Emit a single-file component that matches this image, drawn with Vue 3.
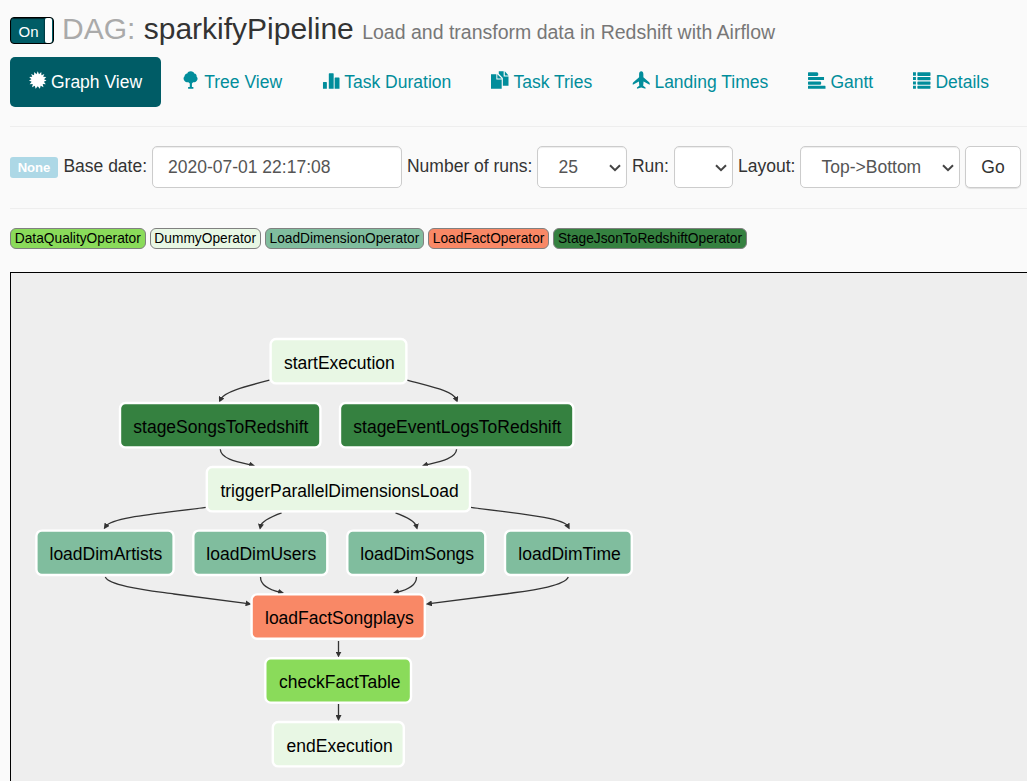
<script setup>
const tabs = [
  { label: 'Graph View', icon: 'certificate', active: true },
  { label: 'Tree View', icon: 'tree' },
  { label: 'Task Duration', icon: 'stats' },
  { label: 'Task Tries', icon: 'duplicate' },
  { label: 'Landing Times', icon: 'plane' },
  { label: 'Gantt', icon: 'align' },
  { label: 'Details', icon: 'list' },
]

const operators = [
  { name: 'DataQualityOperator', kind: 'quality' },
  { name: 'DummyOperator', kind: 'dummy' },
  { name: 'LoadDimensionOperator', kind: 'dimension' },
  { name: 'LoadFactOperator', kind: 'fact' },
  { name: 'StageJsonToRedshiftOperator', kind: 'stage' },
]

const nodes = [
  { name: 'startExecution', kind: 'dummy', x: 270.6, y: 339, w: 135.8, tx: 283.9, ty: 369 },
  { name: 'stageSongsToRedshift', kind: 'stage', x: 120, y: 403, w: 200.4, tx: 133.3, ty: 433 },
  { name: 'stageEventLogsToRedshift', kind: 'stage', x: 340, y: 403, w: 233.4, tx: 353.3, ty: 433 },
  { name: 'triggerParallelDimensionsLoad', kind: 'dummy', x: 206.8, y: 467, w: 263.2, tx: 220.4, ty: 497 },
  { name: 'loadDimArtists', kind: 'dimension', x: 36.4, y: 530.6, w: 137.2, tx: 49.5, ty: 560 },
  { name: 'loadDimUsers', kind: 'dimension', x: 193.3, y: 530.6, w: 134, tx: 206.3, ty: 560 },
  { name: 'loadDimSongs', kind: 'dimension', x: 347.3, y: 530.6, w: 138, tx: 360.3, ty: 560 },
  { name: 'loadDimTime', kind: 'dimension', x: 505, y: 530.6, w: 126.8, tx: 518.3, ty: 560 },
  { name: 'loadFactSongplays', kind: 'fact', x: 251.6, y: 594.4, w: 173.2, tx: 265, ty: 624 },
  { name: 'checkFactTable', kind: 'quality', x: 265.3, y: 658.2, w: 145.7, tx: 279, ty: 688 },
  { name: 'endExecution', kind: 'dummy', x: 272.8, y: 722, w: 131, tx: 286.6, ty: 752 },
]

const edges = [
  'M269.4 380.2C243 387 224 392 220.6 399.3',
  'M407.3 380.2C432 387 453 391 456.3 399.3',
  'M220.3 449.3C220.5 459 238 462 251.5 465',
  'M456.6 449.3C456 459 438 462 425.5 465',
  'M205.8 507.4C165 513 112 517 105.8 526.3',
  'M281.6 512.8C270 517 261.5 521 260.5 526.3',
  'M395.5 512.8C407 517 415 521 416.4 526.3',
  'M471 507.4C511 513 563 517 568 526.3',
  'M105.3 577C109 586 150 590.5 174 594L248 603.7',
  'M260.5 577C260.5 586 270 590 280.5 592.3',
  'M416.5 577C416.5 586 407 590 396.5 592.3',
  'M568.3 577C564 587 525 591 505 594L429.5 603.7',
  'M338.5 641V654',
  'M338.5 704V717.5',
]
</script>

<template>
  <div class="page">
    <header class="title">
      <span class="toggle"><span class="toggle-on">On</span><span class="toggle-handle"></span></span>
      <h3><span class="muted">DAG:</span> sparkifyPipeline <small>Load and transform data in Redshift with Airflow</small></h3>
    </header>

    <nav class="tabs">
      <a v-for="t in tabs" :key="t.label" class="tab" :class="{ active: t.active }">
        <svg class="icon" viewBox="0 0 18 18">
          <path v-if="t.icon === 'certificate'" d="M9 0l1.300 3 2.300-2.300.200 3.300 3-1.300-1.200 3 3.200.2L15.500 8.200 18 9.500l-2.700 1.200 2 2.600-3.200-.1.800 3.200-2.900-1.500L11.200 18 9 15.500 6.800 18 6 14.900l-2.900 1.500.8-3.200-3.200.1 2-2.600L0 9.500l2.500-1.300L.2 5.900l3.200-.2-1.200-3 3 1.300.2-3.300L7.700 3z" />
          <path v-else-if="t.icon === 'tree'" transform="translate(1 0)" d="M8 0c2 0 3.200 1 3.600 2.300 1.700.2 2.600 1.500 2.400 3 1.200 1 1.400 3 .4 4.200-.8 1.400-2.400 2-4 1.900L9.200 12.500V16.300H10.700V18H5.300V16.300H7V12.500L5.600 11.400C3.800 11.500 2 10.800 1.300 9.400.2 8 .5 6.200 1.700 5.200 1.600 3.600 2.700 2.500 4.400 2.300 4.900.9 6.200 0 8 0z" />
          <path v-else-if="t.icon === 'stats'" transform="translate(.5 0)" d="M.5 11.500q0-.5.500-.5h3q.5 0 .5.500V18H.500zM6.500 2.500q0-.5.500-.5h4q.5 0 .5.500V18h-5zM12.500 7q0-.5.500-.5h4q.5 0 .5.500V18H12.500z" />
          <path v-else-if="t.icon === 'duplicate'" d="M0 3h5.500v5.500H11V18H0zM6.500 3l4.500 4.500H6.500zM8 0h5v5.500h5V15h-5.800V7L8 2.500zM14.200 0L18 4.300h-3.800z" />
          <path v-else-if="t.icon === 'plane'" transform="translate(.5 0)" d="M9 0c1.300 0 2.200 1.200 2.200 3v3.200l5.900 5c.5.4.7 1 .7 1.800l-.2.8-6.200-3.300-.4 4.300 2.400 1.800V18L9 16.800 4.600 18v-1.400L7 14.800l-.4-4.300-6.200 3.300-.2-.8c0-.8.200-1.400.7-1.800l5.900-5V3c0-1.800.9-3 2.200-3z" />
          <path v-else-if="t.icon === 'align'" d="M0 1.500q0-.5.500-.5h9l1 1v2l-1 1H.5q-.5 0-.5-.5zM0 6.500Q0 6 .5 6h16v3H.5Q0 9 0 8.500zM0 11q0-.5.5-.5h12.300l.7.700v1.900l-.7.700H.5q-.5 0-.5-.5zM0 15.500q0-.5.5-.5H17.500q.5 0 .5.500V18H0z" />
          <path v-else d="M0 1h3v3.500H0zM4.500 1.500l.5-.5h12.500l.5.500v2.800l-.5.500H5l-.5-.5zM0 6h3v3H0zM4.500 6.500L5 6h12.500l.5.500v2.300l-.5.500H5l-.5-.5zM0 10.500h3v3H0zM4.500 11l.5-.5h12.500l.5.500v2.300l-.5.500H5l-.5-.5zM0 15h3v3H0zM4.500 15.500L5 15h12.500l.5.500v2l-.5.500H5l-.5-.5z" />
        </svg>{{ t.label }}
      </a>
    </nav>

    <form class="filters" @submit.prevent>
      <span class="badge">None</span>
      <label class="base">Base date:</label>
      <input class="control date" value="2020-07-01 22:17:08" />
      <label class="runs">Number of runs:</label>
      <span class="picker count">
        <select class="control"><option>25</option></select>
        <svg class="chevron" viewBox="0 0 12 8"><path d="M1 1.200l5 5 5-5" /></svg>
      </span>
      <label class="run">Run:</label>
      <span class="picker single">
        <select class="control"><option></option></select>
        <svg class="chevron" viewBox="0 0 12 8"><path d="M1 1.200l5 5 5-5" /></svg>
      </span>
      <label class="layout">Layout:</label>
      <span class="picker direction">
        <select class="control"><option>Top-&gt;Bottom</option></select>
        <svg class="chevron" viewBox="0 0 12 8"><path d="M1 1.200l5 5 5-5" /></svg>
      </span>
      <button class="go">Go</button>
    </form>

    <div class="legend">
      <span v-for="o in operators" :key="o.name" class="operator" :class="o.kind">{{ o.name }}</span>
    </div>

    <div class="canvas">
      <svg class="graph" width="1016" height="508" viewBox="11 273 1016 508">
        <defs>
          <marker id="arrow" viewBox="0 0 10 10" refX="4" refY="5" markerWidth="6" markerHeight="6" markerUnits="userSpaceOnUse" orient="auto">
            <path d="M0 0L10 5L0 10z" fill="#333" />
          </marker>
        </defs>
        <path v-for="d in edges" :key="d" class="edge" :d="d" marker-end="url(#arrow)" />
        <g v-for="n in nodes" :key="n.name" class="node" :class="n.kind">
          <rect :x="n.x" :y="n.y" :width="n.w" height="44.4" rx="5.5" />
          <text :x="n.tx" :y="n.ty">{{ n.name }}</text>
        </g>
      </svg>
    </div>
  </div>
</template>

<style>
html,
body {
  background: #fafafa;
  overflow: hidden;
}
</style>

<style scoped>
.page {
  box-sizing: border-box;
  width: 1027px;
  height: 781px;
  padding-left: 10px;
  overflow: hidden;
  background: #fafafa;
  color: #333;
  font: 17.5px/25px 'Liberation Sans', Arial, sans-serif;
}
.title {
  display: flex;
  height: 57px;
}
.toggle {
  box-sizing: border-box;
  display: flex;
  width: 44px;
  height: 27px;
  margin-top: 17px;
  border: 1px solid #000;
  border-radius: 4px;
  background: #005c66;
  color: #fff;
  font-size: 15px;
  line-height: 28px;
  overflow: hidden;
}
.toggle-on {
  width: 34px;
  padding-left: 7.5px;
  border-right: 1px solid #003c43;
  box-sizing: border-box;
  box-shadow: inset 0 1px 1px #00252a;
}
.toggle-handle {
  width: 7px;
  border-radius: 2px;
  background: #fff;
}
h3 {
  margin: 12px 0 0 8px;
  font-size: 30px;
  font-weight: 400;
  line-height: 33px;
  white-space: nowrap;
}
.muted {
  color: #aaa;
}
small {
  font-size: 19.5px;
  color: #777;
}
.tabs {
  display: flex;
  gap: 2.5px;
  height: 50px;
}
.tab {
  display: flex;
  box-sizing: border-box;
  padding: 12.5px 18.75px;
  border-radius: 5px;
  color: #018d9b;
  white-space: nowrap;
}
.tab.active {
  background: #005c66;
  color: #fff;
}
.icon {
  width: 17.5px;
  height: 18px;
  margin: 1px 4.7px 0 0;
  fill: currentColor;
  overflow: visible;
}
.filters {
  display: flex;
  box-sizing: border-box;
  height: 83px;
  margin-top: 19px;
  padding-top: 19px;
  border-top: 1px solid #eee;
  border-bottom: 1px solid #eee;
  white-space: nowrap;
}
.filters label {
  margin-top: 8px;
  flex: none;
}
.badge {
  width: 48px;
  height: 21px;
  margin: 11px 5.4px 0 0;
  border-radius: 3px;
  background: #add8e6;
  color: #fff;
  font-size: 13.1px;
  font-weight: 700;
  line-height: 21px;
  text-align: center;
}
.base {
  width: 88.6px;
}
.runs {
  width: 130px;
  margin-left: 5px;
}
.run {
  width: 42px;
  margin-left: 5px;
}
.layout {
  width: 62px;
  margin-left: 5px;
}
.control {
  box-sizing: border-box;
  width: 100%;
  height: 42px;
  margin: 0;
  padding: 0 0 0 20.5px;
  border: 1px solid #ccc;
  border-radius: 5px;
  background: #fff;
  box-shadow: inset 0 1px 1px rgba(0, 0, 0, 0.075);
  color: #555;
  font: inherit;
  appearance: none;
}
.date {
  width: 250px;
  padding-left: 15px;
}
.picker {
  position: relative;
  height: 42px;
}
.count {
  width: 90px;
}
.single {
  width: 59px;
}
.direction {
  width: 160px;
}
.chevron {
  position: absolute;
  top: 18px;
  right: 6px;
  width: 12px;
  height: 8px;
  fill: none;
  stroke: #444;
  stroke-width: 2;
}
.go {
  box-sizing: border-box;
  width: 56px;
  height: 42px;
  margin-left: 5px;
  padding: 0;
  border: 1px solid #ccc;
  border-radius: 5px;
  background: #fff;
  box-shadow: 0 1px 1px rgba(0, 0, 0, 0.1);
  color: #333;
  font: inherit;
}
.legend {
  display: flex;
  gap: 4px;
  height: 63px;
  padding-top: 19px;
  box-sizing: border-box;
}
.operator {
  box-sizing: border-box;
  height: 21px;
  padding: 0 3.75px;
  border: 1px solid #808080;
  border-radius: 6px;
  color: #000;
  font-size: 13.75px;
  line-height: 19px;
}
.operator.quality { background: #8adb5a; }
.operator.dummy { background: #e8f7e4; }
.operator.dimension { background: #80bd9e; }
.operator.fact { background: #f98866; }
.operator.stage { background: #358140; }
.canvas {
  width: 1017px;
  height: 509px;
  box-sizing: border-box;
  border-top: 1px solid #000;
  border-left: 1px solid #000;
  background: #eee;
}
.graph {
  display: block;
}
.edge {
  fill: none;
  stroke: #333;
  stroke-width: 1.3;
}
.node rect {
  stroke: #fff;
  stroke-width: 2.4;
}
.node.quality rect { fill: #8adb5a; }
.node.dummy rect { fill: #e8f7e4; }
.node.dimension rect { fill: #80bd9e; }
.node.fact rect { fill: #f98866; }
.node.stage rect { fill: #358140; }
.node text {
  fill: #000;
  font-size: 17.5px;
}
</style>
